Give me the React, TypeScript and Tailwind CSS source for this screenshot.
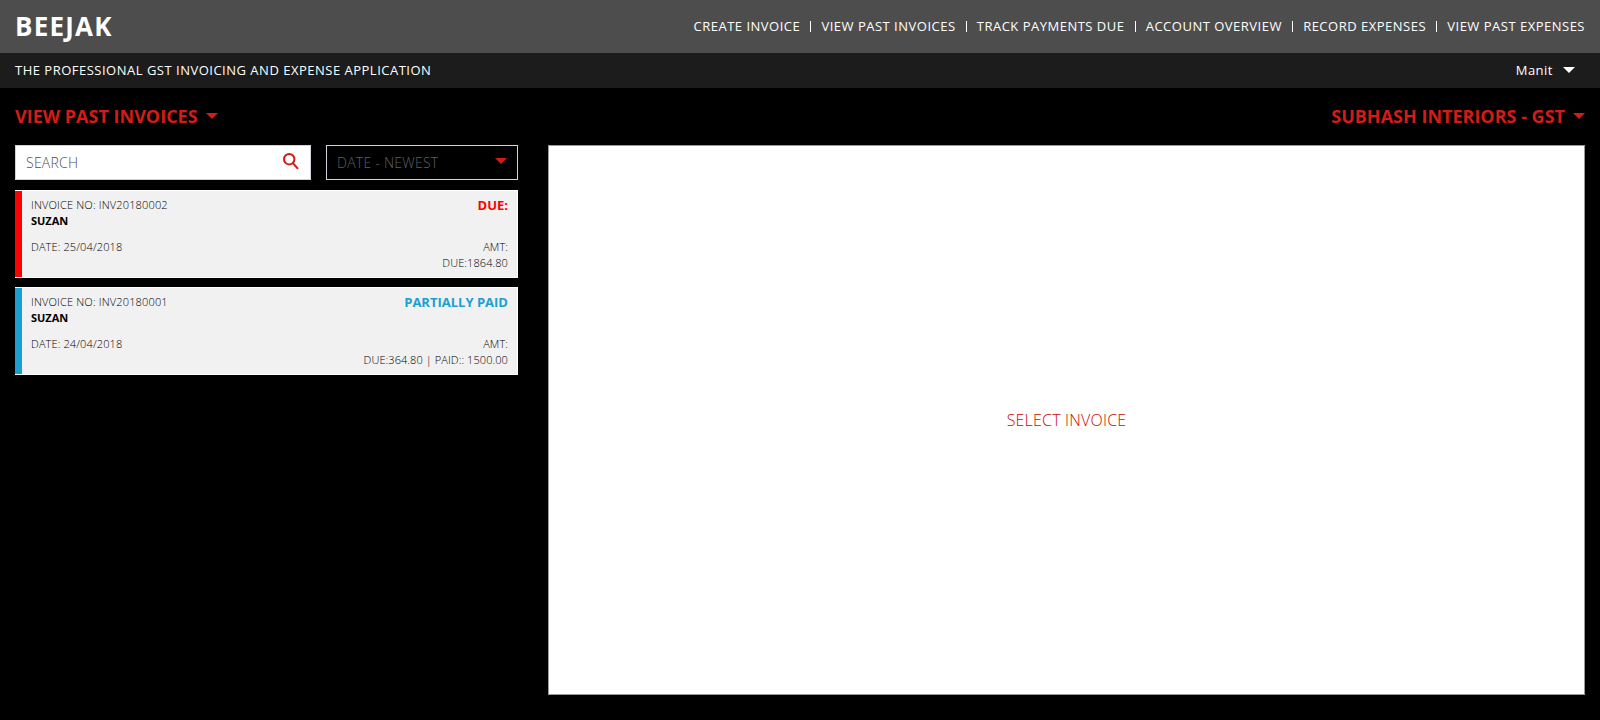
import React from "react";

const links = [
  "CREATE INVOICE",
  "VIEW PAST INVOICES",
  "TRACK PAYMENTS DUE",
  "ACCOUNT OVERVIEW",
  "RECORD EXPENSES",
  "VIEW PAST EXPENSES",
];

const invoices = [
  {
    no: "INV20180002",
    client: "SUZAN",
    date: "25/04/2018",
    status: "DUE:",
    amount: "DUE:1864.80",
    bar: "bg-[#ff0000]",
    tone: "text-[#ff0000]",
  },
  {
    no: "INV20180001",
    client: "SUZAN",
    date: "24/04/2018",
    status: "PARTIALLY PAID",
    amount: "DUE:364.80 | PAID:: 1500.00",
    bar: "bg-[#1a9fd3]",
    tone: "text-[#1a9fd3]",
  },
];

function Caret({ className }: { className: string }) {
  return (
    <svg viewBox="0 0 12 6" className={`h-1.5 w-3 shrink-0 ${className}`} fill="currentColor">
      <path d="M0 0h12L6 6z" />
    </svg>
  );
}

function SearchIcon() {
  return (
    <svg viewBox="0 0 16 17" className="mb-0.5 h-[17px] w-4 text-[#d31c17]" fill="none" stroke="currentColor" strokeWidth="2">
      <circle cx="6.2" cy="6.2" r="5.2" />
      <path d="M9.8 10l5.2 5.8" />
    </svg>
  );
}

export default function App() {
  return (
    <div className="flex h-[720px] flex-col bg-black font-['Open_Sans','Noto_Sans',sans-serif] text-white">
      <header className="flex h-[53px] shrink-0 items-center justify-between bg-[#4d4d4d] px-[15px]">
        <h1 className="text-[26px] leading-[53px] font-bold tracking-[1.2px]">BEEJAK</h1>
        <nav className="flex items-center text-[13px] leading-5 font-medium tracking-[0.5px]">
          {links.map((link, i) => (
            <React.Fragment key={link}>
              {i > 0 && <span className="mr-[10.2px] ml-[10px] h-[11px] w-px bg-white" />}
              <a className="pb-0.5">{link}</a>
            </React.Fragment>
          ))}
        </nav>
      </header>

      <div className="flex h-[35px] shrink-0 items-center justify-between bg-[#1c1c1c] pr-[25px] pl-[15px] text-[13px] font-medium tracking-[0.5px]">
        <p>THE PROFESSIONAL GST INVOICING AND EXPENSE APPLICATION</p>
        <div className="flex items-center gap-2.5">
          <span>Manit</span>
          <Caret className="mb-px text-white" />
        </div>
      </div>

      <div className="flex h-[57px] shrink-0 items-center justify-between px-[15px] pb-0.5 text-lg font-bold text-[#d31c17]">
        <div className="flex items-center gap-2">
          <span>VIEW PAST INVOICES</span>
          <Caret className="" />
        </div>
        <div className="flex items-center gap-2">
          <span>SUBHASH INTERIORS - GST</span>
          <Caret className="" />
        </div>
      </div>

      <main className="flex gap-[30px] px-[15px]">
        <section className="w-[503px]">
          <div className="flex gap-[15px]">
            <div className="flex h-[35px] w-[296px] items-center justify-between border border-[#ced4da] bg-white pr-[11px] pl-2.5 text-sm font-light tracking-[0.25px] text-[#495057]">
              <span>SEARCH</span>
              <SearchIcon />
            </div>
            <div className="flex h-[35px] w-48 items-center justify-between border border-[#ced4da] pr-2.5 pl-2.5 text-sm font-light tracking-[0.25px] text-[#59616a]">
              <span>DATE - NEWEST</span>
              <Caret className="mb-1 text-[#d31c17]" />
            </div>
          </div>

          <div className="mt-2.5 flex flex-col gap-[9px]">
            {invoices.map((inv) => (
              <article
                key={inv.no}
                className="flex h-[88px] border-y border-r border-white bg-[#f1f1f1] text-[11px] leading-4 font-light text-black"
              >
                <div className={`w-[7px] shrink-0 ${inv.bar}`} />
                <div className="flex flex-1 justify-between pt-1.5 pr-[9px] pl-[9px]">
                  <div>
                    <p className="tracking-[0.16px]">INVOICE NO: {inv.no}</p>
                    <p className="font-bold text-black">{inv.client}</p>
                    <p className="mt-2.5 tracking-[0.12px]">DATE: {inv.date}</p>
                  </div>
                  <div className="text-right">
                    <p className={`mb-[26px] text-[13px] leading-4 font-bold ${inv.tone}`}>{inv.status}</p>
                    <p className="tracking-[0.09px]">AMT:</p>
                    <p className="tracking-[0.09px]">{inv.amount}</p>
                  </div>
                </div>
              </article>
            ))}
          </div>
        </section>

        <section className="flex h-[550px] flex-1 items-center justify-center border border-[#999999] bg-white text-base font-light tracking-[0.2px] text-[#c90a05]">
          SELECT INVOICE
        </section>
      </main>
    </div>
  );
}
